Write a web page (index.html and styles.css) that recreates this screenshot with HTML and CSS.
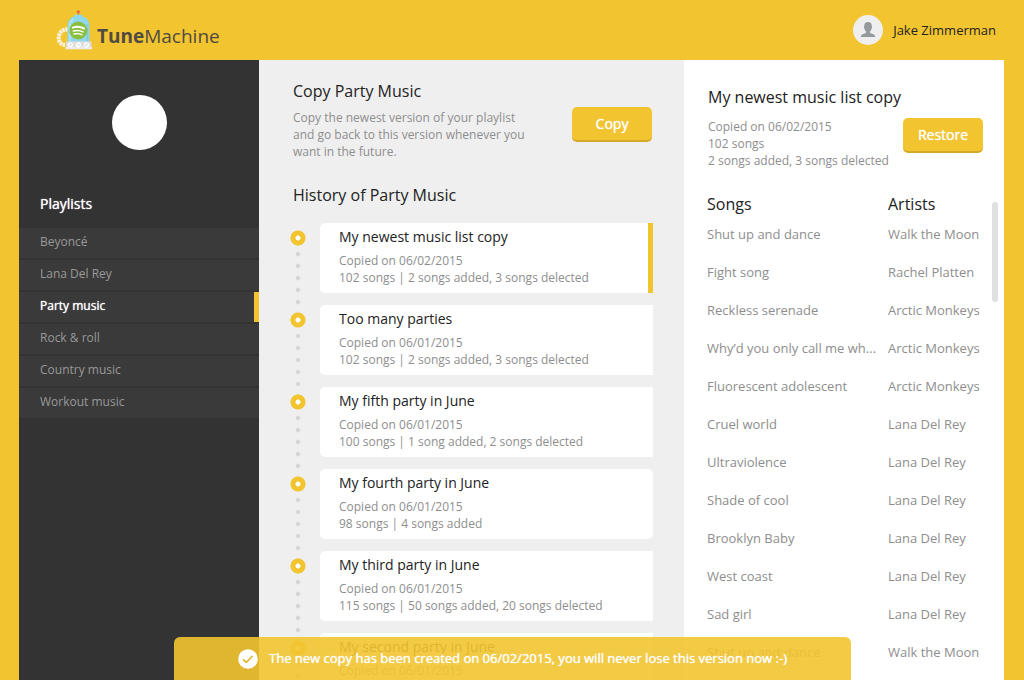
FILE: index.html
```html
<!DOCTYPE html>
<html lang="en">
<head>
<meta charset="utf-8">
<title>TuneMachine</title>
<link rel="stylesheet" href="styles.css">
</head>
<body>
<div class="app">
  <header class="header">
    <a class="logo" href="#">
      <svg class="logo-icon" width="38" height="42" viewBox="0 0 38 42" aria-hidden="true">
        <path d="M11.500 20.500C4 20 .800 28 4 33.500Q5.500 35.500 9 36" fill="none" stroke="#f6dc8c" stroke-width="4"/>
        <path d="M11.500 20.500C4 20 .800 28 4 33.500Q5.500 35.500 9 36" fill="none" stroke="#fffaf0" stroke-width="4" stroke-dasharray="1.500 1.700"/>
        <path d="M22.300 3v4" stroke="#b07a52" stroke-width="1"/>
        <circle cx="22.300" cy="2.800" r="1.500" fill="#ee6240"/>
        <path d="M11.500 34V17C11.500 11 15 8.500 18 7.500V5.800h8.600v1.700C30 8.500 33.500 11 33.500 17v17z" fill="#90d9ec"/>
        <path d="M14 33V17c0-4 1.500-6 3.500-7" fill="none" stroke="#b4e8f3" stroke-width="1.500"/>
        <path d="M31.500 15v18" stroke="#7bcbe0" stroke-width="1.500"/>
        <circle cx="22.300" cy="21.500" r="9" fill="#8bbf3f"/>
        <g fill="none" stroke="#fff" stroke-linecap="round">
          <path d="M16.800 18.600c4-1.300 7.700-.9 11.200.9" stroke-width="2"/>
          <path d="M17.400 22c3.500-1 6.600-.6 9.600.9" stroke-width="1.600"/>
          <path d="M18 25c2.900-.8 5.500-.4 8 .8" stroke-width="1.300"/>
        </g>
        <rect x="10" y="32.500" width="25.500" height="7.500" rx="1" fill="#dedede"/>
        <rect x="9.500" y="38" width="26.500" height="2.300" fill="#ececec"/>
        <g fill="#fff"><circle cx="14.400" cy="35.800" r="2.600"/><circle cx="22.400" cy="35.800" r="2.600"/><circle cx="30.600" cy="35.800" r="2.600"/></g>
        <path d="M13.400 37l2-2.400M21.400 34.800l2 2M29.600 37l2-2.400" stroke="#b5b5b5" stroke-width=".9"/>
      </svg>
      <span class="logo-text"><b>Tune</b>Machine</span>
    </a>
    <a class="user" href="#">
      <svg width="30" height="30" viewBox="0 0 30 30" aria-hidden="true">
        <circle cx="15" cy="15" r="15" fill="#efefef"/>
        <path d="M15 7c-2.800 0-4 1.800-3.800 4.600-.5.300-.4 1.800.4 2.300.3 1.300.8 1.900 1.300 2.400v1.500c-1 1.200-5.200 1.200-5.200 4.200h14.600c0-3-4.200-3-5.200-4.200v-1.500c.5-.5 1-1.100 1.300-2.400.8-.5.900-2 .4-2.300C19 8.800 17.800 7 15 7z" fill="#959a9d"/>
      </svg>
      <span>Jake Zimmerman</span>
    </a>
  </header>

  <div class="columns">
    <nav class="sidebar" aria-label="Playlists">
      <div class="cover"></div>
      <h2 class="sidebar-title">Playlists</h2>
      <ul class="playlists">
        <li><a class="playlist" href="#">Beyoncé</a></li>
        <li><a class="playlist" href="#">Lana Del Rey</a></li>
        <li><a class="playlist active" href="#" aria-current="page">Party music</a></li>
        <li><a class="playlist" href="#">Rock &amp; roll</a></li>
        <li><a class="playlist" href="#">Country music</a></li>
        <li><a class="playlist" href="#">Workout music</a></li>
      </ul>
    </nav>

    <main class="history">
      <section class="copy">
        <div>
          <h1 class="heading">Copy Party Music</h1>
          <p class="meta copy-note">Copy the newest version of your playlist and go back to this version whenever you want in the future.</p>
        </div>
        <button class="button" type="button">Copy</button>
      </section>
      <h2 class="heading">History of Party Music</h2>
      <ol class="timeline">
        <li class="entry"><div class="rail"><i class="ring"></i></div>
          <article class="card selected"><h3 class="card-title">My newest music list copy</h3><p class="meta">Copied on 06/02/2015<br>102 songs | 2 songs added, 3 songs delected</p></article></li>
        <li class="entry"><div class="rail"><i class="ring"></i></div>
          <article class="card"><h3 class="card-title">Too many parties</h3><p class="meta">Copied on 06/01/2015<br>102 songs | 2 songs added, 3 songs delected</p></article></li>
        <li class="entry"><div class="rail"><i class="ring"></i></div>
          <article class="card"><h3 class="card-title">My fifth party in June</h3><p class="meta">Copied on 06/01/2015<br>100 songs | 1 song added, 2 songs delected</p></article></li>
        <li class="entry"><div class="rail"><i class="ring"></i></div>
          <article class="card rounded"><h3 class="card-title">My fourth party in June</h3><p class="meta">Copied on 06/01/2015<br>98 songs | 4 songs added</p></article></li>
        <li class="entry"><div class="rail"><i class="ring"></i></div>
          <article class="card"><h3 class="card-title">My third party in June</h3><p class="meta">Copied on 06/01/2015<br>115 songs | 50 songs added, 20 songs delected</p></article></li>
        <li class="entry"><div class="rail"><i class="ring"></i></div>
          <article class="card"><h3 class="card-title">My second party in June</h3><p class="meta">Copied on 06/01/2015</p></article></li>
      </ol>
    </main>

    <aside class="details">
      <h2 class="heading details-title">My newest music list copy</h2>
      <div class="summary">
        <p class="meta">Copied on 06/02/2015<br>102 songs<br>2 songs added, 3 songs delected</p>
        <button class="button" type="button">Restore</button>
      </div>
      <div class="song-list">
        <table class="songs">
          <thead><tr><th scope="col">Songs</th><th class="artist" scope="col">Artists</th></tr></thead>
          <tbody>
            <tr><td>Shut up and dance</td><td>Walk the Moon</td></tr>
            <tr><td>Fight song</td><td>Rachel Platten</td></tr>
            <tr><td>Reckless serenade</td><td>Arctic Monkeys</td></tr>
            <tr><td>Why’d you only call me wh...</td><td>Arctic Monkeys</td></tr>
            <tr><td>Fluorescent adolescent</td><td>Arctic Monkeys</td></tr>
            <tr><td>Cruel world</td><td>Lana Del Rey</td></tr>
            <tr><td>Ultraviolence</td><td>Lana Del Rey</td></tr>
            <tr><td>Shade of cool</td><td>Lana Del Rey</td></tr>
            <tr><td>Brooklyn Baby</td><td>Lana Del Rey</td></tr>
            <tr><td>West coast</td><td>Lana Del Rey</td></tr>
            <tr><td>Sad girl</td><td>Lana Del Rey</td></tr>
            <tr><td>Shut up and dance</td><td>Walk the Moon</td></tr>
          </tbody>
        </table>
        <div class="thumb"></div>
      </div>
    </aside>
  </div>

  <div class="toast" role="status">
    <svg width="20" height="20" viewBox="0 0 20 20" aria-hidden="true">
      <circle cx="10" cy="10" r="9.800" fill="#fff"/>
      <path d="M5 10.300l3.300 3 6.200-6.300" fill="none" stroke="#dfb52e" stroke-width="1.700"/>
    </svg>
    <span>The new copy has been created on 06/02/2015, you will never lose this version now :-)</span>
  </div>
</div>
</body>
</html>
```
FILE: styles.css
```css
* { box-sizing: border-box; }

body {
  margin: 0;
  background: #f2c430;
  color: #222;
  font: 12px/17px "Open Sans", "Noto Sans", sans-serif;
}

h1, h2, h3, p, ul, ol { margin: 0; padding: 0; font-weight: 400; }
ul, ol { list-style: none; }
a { color: inherit; text-decoration: none; }

.app {
  position: relative;
  display: flex;
  flex-direction: column;
  height: 100vh;
  overflow: hidden;
}

.header {
  display: flex;
  justify-content: space-between;
  flex: none;
  height: 60px;
  padding: 0 28px 0 56px;
}
.logo { display: flex; padding-top: 9px; gap: 3px; }
.logo-text { padding-top: 15px; color: #504b42; font-size: 19px; line-height: 24px; }
.user { display: flex; align-items: center; gap: 10px; font-size: 13px; }

.columns {
  display: flex;
  flex: 1;
  min-height: 0;
  margin: 0 20px 0 19px;
}

.sidebar { flex: none; width: 240px; background: #333; color: #999; overflow: hidden; }
.cover { width: 55px; height: 55px; margin: 35px auto 0; border-radius: 50%; background: #fff; }
.sidebar-title { margin: 44px 0 14px 21px; color: #fff; font-size: 14px; line-height: 20px; }
.playlists { display: grid; gap: 2px; }
.playlist { display: block; padding: 5px 0 8px 21px; background: #3a3a3a; }
.playlist.active { border-right: 5px solid #f2c430; color: #fff; }
.sidebar-title, .playlist.active, .button, .toast { text-shadow: 0 0 1px #fff; }

.history { flex: 1; min-width: 0; padding: 20px 31px 0 34px; background: #efefef; overflow: hidden; }
.heading { font-size: 16px; line-height: 22px; }
.meta { color: #8e8e8e; }
.copy { display: flex; justify-content: space-between; margin-bottom: 24px; }
.copy-note { max-width: 240px; margin-top: 7px; }
.button {
  flex: none;
  width: 80px;
  height: 35px;
  padding: 0;
  border: 0;
  border-bottom: 2px solid #d3aa28;
  border-radius: 5px;
  background: #f2c430;
  color: #fff;
  font: 400 14px/20px "Open Sans", "Noto Sans", sans-serif;
}
.copy .button { margin: 27px 1px 0 0; }

.timeline { margin-top: 24px; margin-left: -3px; }
.entry { display: flex; gap: 14px; align-items: flex-start; }
.rail {
  flex: none;
  width: 16px;
  height: 82px;
  background: radial-gradient(circle at 8px 6px, #d2d2d2 0 1px, #efefef 3px) 0 18px / 16px 12px repeat-y;
}
.ring { display: block; width: 16px; height: 20px; background: #efefef radial-gradient(circle at 8px 8px, #fff 0 2px, #f2c430 3px 7px, #efefef 8px); }
.card { flex: 1; height: 70px; margin-top: -7px; padding: 4px 19px; border-radius: 5px 0 0 5px; background: #fff; }
.card.selected { border-right: 5px solid #f2c430; }
.card.rounded { border-radius: 5px; }
.card-title { margin-bottom: 5px; font-size: 14px; line-height: 20px; }

.details { flex: none; display: flex; flex-direction: column; width: 320px; padding: 26px 6px 0 23px; background: #fff; overflow: hidden; }
.details-title { margin-left: 1px; }
.summary { display: flex; justify-content: space-between; align-items: flex-start; margin: 10px 15px 0 1px; }
.song-list { display: flex; flex: 1; min-height: 0; margin-top: 24px; overflow: hidden; }
.songs { flex: 1; align-self: flex-start; border-collapse: collapse; table-layout: fixed; width: 100%; color: #8e8e8e; font-size: 13px; }
.songs th { height: 22px; padding: 0; color: #222; font-size: 16px; font-weight: 400; line-height: 22px; text-align: left; }
.songs .artist { width: 104px; }
.songs td { height: 38px; padding: 0; white-space: nowrap; }
.thumb { flex: none; width: 6px; height: 100px; margin-top: 9px; border-radius: 3px; background: #e0e0e0; }

.toast {
  position: absolute;
  right: 173px;
  bottom: 0;
  left: 174px;
  display: flex;
  align-items: center;
  justify-content: center;
  gap: 11px;
  height: 43px;
  border-radius: 6px 6px 0 0;
  background: rgba(242, 196, 48, 0.9);
  color: #fff;
  font-size: 13px;
}
```
